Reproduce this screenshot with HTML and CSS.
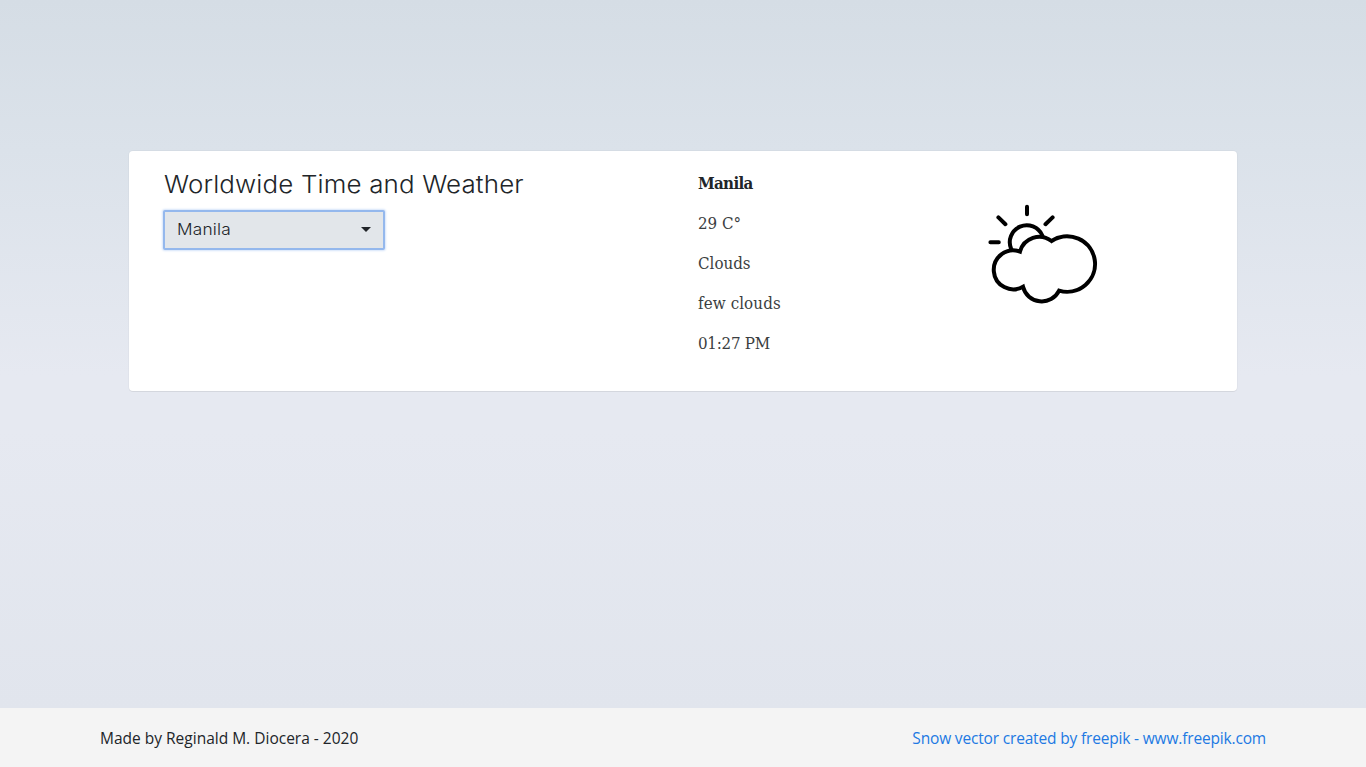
FILE: index.html
```html
<!DOCTYPE html>
<html lang="en">
<head>
<meta charset="utf-8">
<title>Worldwide Time and Weather</title>
<link rel="stylesheet" href="styles.css">
</head>
<body>
<main class="page">
  <section class="card">
    <div class="picker">
      <h1 class="title"><span class="wide">Worldwide Time and Weather</span></h1>
      <button class="select" type="button"><span class="wide">Manila</span><span class="caret"></span></button>
    </div>
    <div class="weather">
      <p class="place">Manila</p>
      <p class="temp">29 C°</p>
      <p class="main">Clouds</p>
      <p class="detail">few clouds</p>
      <p class="time">01:27 PM</p>
    </div>
    <svg class="icon" width="140" height="130" viewBox="0 0 140 130" fill="none" stroke="#000" stroke-width="4" stroke-linecap="round" stroke-linejoin="miter">
      <path d="M50.5 61.5A19.5 19.5 0 1 0 53.5 96.7A19.3 19.3 0 0 0 89.6 100.6A28 27.7 0 1 0 82 51A20 20 0 0 0 50.5 61.5Z" transform="translate(-.5 0)"/>
      <path d="M41.2 59A16.5 16.5 0 0 1 72.3 45.5M57 16.7V24.3M28.4 27.4L35.4 34.2M82.6 27.4L75.5 34.2M20.4 52.3H28.8"/>
    </svg>
  </section>
</main>
<footer class="footer">
  <span class="credit">Made by Reginald M. Diocera - 2020</span>
  <a class="link">Snow vector created by freepik - www.freepik.com</a>
</footer>
</body>
</html>
```
FILE: styles.css
```css
* { box-sizing: border-box; }
body {
  margin: 0;
  height: 767px;
  display: flex;
  flex-direction: column;
  color: #212529;
  background: linear-gradient(#d5dde5 0, #dbe2ea 150px, #e6e9f1 375px, #e6e9f1 430px, #e1e5ed 708px);
}
.page { flex: 1; padding: 151px 129px 0; }
.card {
  display: flex;
  height: 240px;
  padding: 19px 0 0 35px;
  background: #fff;
  border-radius: 4px;
  box-shadow: 0 0 0 1px rgba(0, 0, 0, .025), 0 1px 0 rgba(0, 0, 0, .05);
}
.picker { width: 534px; }
.wide {
  display: inline-block;
  transform: scaleX(1.08);
  transform-origin: left;
}
.title {
  margin: 0 0 11px;
  font: 300 24px/29px Inter, sans-serif;
  letter-spacing: .14px;
  white-space: nowrap;
}
.select {
  display: flex;
  align-items: center;
  justify-content: space-between;
  width: 222px;
  height: 40px;
  margin-left: -1px;
  padding: 0 12px 3px;
  border: 2px solid #94b8ed;
  border-radius: 2px;
  background: #e2e6ea;
  box-shadow: 0 0 2px 1px #d5e4fa;
  color: #212529;
  font: 300 16px/24px Inter, sans-serif;
  letter-spacing: .2px;
}
.caret {
  margin-top: 2px;
  border: 5px solid transparent;
  border-top-color: #212529;
  border-bottom: 0;
}
.weather { width: 274px; padding-top: 1px; }
.weather p {
  margin: 0 0 16px;
  font: 16.8px/24px "DejaVu Serif Condensed", "DejaVu Serif", serif;
  font-stretch: condensed;
  color: #3b3e41;
}
.weather .place { font-weight: 700; letter-spacing: -.7px; color: #212529; }
.weather .detail { letter-spacing: .1px; }
.weather .time { letter-spacing: -.25px; }
.icon { margin: 20px 0 0 -2px; }
.footer {
  display: flex;
  align-items: center;
  justify-content: space-between;
  height: 59px;
  padding: 1px 100px 0;
  background: #f4f4f4;
  font: 15.5px/24px "Open Sans", sans-serif;
}
.link { color: #2179e3; letter-spacing: -.17px; }
```
